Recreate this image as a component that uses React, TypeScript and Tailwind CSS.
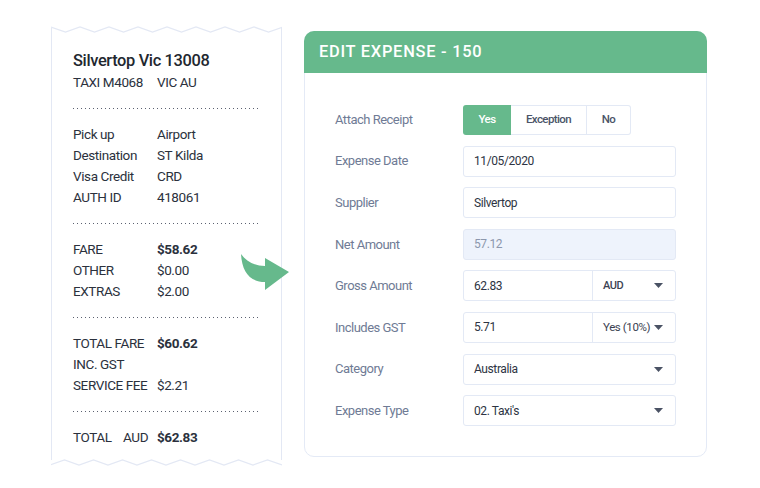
import React from "react"

const font = { fontFamily: "Roboto, 'Noto Sans', sans-serif" }

function Dots() {
  return <div className="mt-[14.5px] mb-[15.5px] h-px w-full bg-[linear-gradient(to_right,#5b6170_1px,transparent_1px)] bg-[length:4px_1px]" />
}

function Row({ label, value, bold }: { label: React.ReactNode; value?: string; bold?: boolean }) {
  return (
    <div className="flex h-[21px] items-center text-[13.5px] tracking-[-0.4px] text-[#2b313d]">
      <div className="w-[84px] shrink-0 whitespace-nowrap">{label}</div>
      <div className={bold ? "font-bold" : ""}>{value}</div>
    </div>
  )
}

function Zigzag({ flip }: { flip?: boolean }) {
  // jagged paper edge
  const pts: string[] = []
  for (let i = 0; i <= 16; i++) pts.push(`${i * 14.5},${i % 2 === 0 ? 1 : 6}`)
  return (
    <svg width="231" height="8" viewBox="0 0 231 8" className={"block " + (flip ? "rotate-180" : "")}>
      <polyline points={pts.join(" ")} fill="none" stroke="#e3e8f4" strokeWidth="1.2" />
    </svg>
  )
}

function Receipt() {
  return (
    <div className="w-[231px] shrink-0">
      <Zigzag />
      <div className="-mt-[6px] border-x border-[#e3e8f4] px-[21px] pt-[22px] pb-[12px]">
        <div className="text-[16.4px] font-medium leading-[22px] tracking-[-0.35px] text-[#22272f]">Silvertop Vic 13008</div>
        <div className="flex h-[21px] items-center text-[13.5px] tracking-[-0.4px] text-[#2b313d]">
          <span className="w-[84px]">TAXI M4068</span>
          <span>VIC AU</span>
        </div>
        <Dots />
        <Row label="Pick up" value="Airport" />
        <Row label="Destination" value="ST Kilda" />
        <Row label="Visa Credit" value="CRD" />
        <Row label="AUTH ID" value="418061" />
        <Dots />
        <Row label="FARE" value="$58.62" bold />
        <Row label="OTHER" value="$0.00" />
        <Row label="EXTRAS" value="$2.00" />
        <Dots />
        <Row label="TOTAL FARE" value="$60.62" bold />
        <Row label="INC. GST" />
        <Row label="SERVICE FEE" value="$2.21" />
        <Dots />
        <Row
          label={
            <span className="flex">
              <span className="w-[50px]">TOTAL</span>
              <span>AUD</span>
            </span>
          }
          value="$62.83"
          bold
        />
      </div>
      <div className="-mt-[2px]">
        <Zigzag flip />
      </div>
    </div>
  )
}

function Caret() {
  return (
    <svg width="9" height="5" viewBox="0 0 9 5" className="shrink-0">
      <path d="M0 0H9L4.5 5Z" fill="#4a5264" />
    </svg>
  )
}

const box =
  "h-[31px] flex items-center rounded-[3px] border border-[#e3e9f5] px-[10px] text-[12px] tracking-[-0.4px] text-[#2d3443]"

function Field({ label, children }: { label: string; children: React.ReactNode }) {
  return (
    <div className="flex h-[31px] items-center">
      <div className="w-[128px] shrink-0 text-[13px] tracking-[-0.5px] text-[#6f7b95]">{label}</div>
      <div className="flex-1">{children}</div>
    </div>
  )
}

function ExpenseCard() {
  return (
    <div className="mt-[5px] w-[403px] shrink-0 rounded-[10px] border border-[#e4eaf6]">
      <div className="flex h-[42px] items-center rounded-t-[10px] bg-[#66b98c] px-[15px] -mx-px -mt-px">
        <span className="text-[16.4px] font-medium tracking-[0.75px] text-white">EDIT EXPENSE - 150</span>
      </div>
      <div className="flex flex-col gap-[10.6px] px-[30px] pt-[31px] pb-[30px]">
        <Field label="Attach Receipt">
          <div className="flex h-[30px] text-[11.5px] font-medium tracking-[-0.6px]">
            <div className="flex w-[48px] items-center justify-center rounded-l-[3px] bg-[#66b98c] text-white">Yes</div>
            <div className="flex w-[76px] items-center justify-center border border-l-0 border-[#e3e9f5] text-[#4b5468]">Exception</div>
            <div className="flex w-[44px] items-center justify-center rounded-r-[3px] border border-l-0 border-[#e3e9f5] text-[#4b5468]">No</div>
          </div>
        </Field>
        <Field label="Expense Date">
          <div className={box}>11/05/2020</div>
        </Field>
        <Field label="Supplier">
          <div className={box}>Silvertop</div>
        </Field>
        <Field label="Net Amount">
          <div className={box + " bg-[#eef3fc] !text-[#8c97ad]"}>57.12</div>
        </Field>
        <Field label="Gross Amount">
          <div className="flex h-[31px] rounded-[3px] border border-[#e3e9f5] text-[12px] tracking-[-0.4px] text-[#2d3443]">
            <div className="flex w-[129px] items-center border-r border-[#e3e9f5] px-[10px]">62.83</div>
            <div className="flex flex-1 items-center justify-between pl-[10px] pr-[12px] text-[11px] font-medium text-[#3b4252]">
              AUD
              <Caret />
            </div>
          </div>
        </Field>
        <Field label="Includes GST">
          <div className="flex h-[31px] rounded-[3px] border border-[#e3e9f5] text-[12px] tracking-[-0.4px] text-[#2d3443]">
            <div className="flex w-[129px] items-center border-r border-[#e3e9f5] px-[10px]">5.71</div>
            <div className="flex flex-1 items-center justify-between whitespace-nowrap pl-[10px] pr-[12px] text-[11.5px] text-[#3b4252]">
              Yes (10%)
              <Caret />
            </div>
          </div>
        </Field>
        <Field label="Category">
          <div className={box + " justify-between !pr-[12px]"}>
            Australia
            <Caret />
          </div>
        </Field>
        <Field label="Expense Type">
          <div className={box + " justify-between !pr-[12px]"}>
            02. Taxi's
            <Caret />
          </div>
        </Field>
      </div>
    </div>
  )
}

export default function App() {
  return (
    <div className="relative h-[488px] w-[760px] bg-white" style={font}>
      <div className="flex items-start gap-[22px] pl-[51px] pt-[26px]">
        <Receipt />
        <ExpenseCard />
      </div>
      {/* curved arrow between receipt and form */}
      <svg width="52" height="42" viewBox="0 0 52 42" className="absolute left-[240px] top-[251px]">
        <path
          d="M1 3C6 10 14 15 25 15L25 7L49 21L25 39L25 31C10 31 2 21 1 3Z"
          fill="#66b98c"
        />
      </svg>
    </div>
  )
}
